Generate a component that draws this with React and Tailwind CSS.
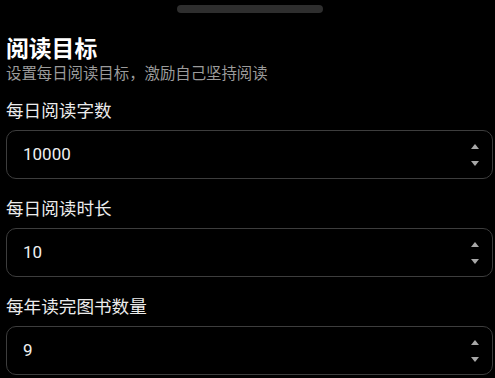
import React from "react";

const fields = [
  { label: "每日阅读字数", value: "10000" },
  { label: "每日阅读时长", value: "10" },
  { label: "每年读完图书数量", value: "9" },
];

const NumberField = ({ label, value }) => (
  <div className="flex flex-col">
    <label className="text-[17.6px] leading-[26px] text-[#ececec] mb-[6px]">{label}</label>
    <div className="h-[49px] flex items-center justify-between pl-4 pr-[13px] rounded-[10px] border border-[#3d3d3d]">
      <span className="text-[17px] text-[#f0f0f0]">{value}</span>
      <div className="flex flex-col items-center gap-[12px]">
        <span className="block w-0 h-0 border-l-[4px] border-r-[4px] border-b-[5px] border-l-transparent border-r-transparent border-b-[#a8a8a8]" />
        <span className="block w-0 h-0 border-l-[4px] border-r-[4px] border-t-[5px] border-l-transparent border-r-transparent border-t-[#a8a8a8]" />
      </div>
    </div>
  </div>
);

export default function App() {
  return (
    <div
      className="min-h-screen w-full bg-black text-white pl-[6px] pr-[2px] overflow-hidden"
      style={{ fontFamily: 'Roboto, "Noto Sans CJK SC", sans-serif' }}
    >
      {/* drag handle */}
      <div className="pt-[5px] flex justify-center">
        <div className="h-2 w-[146px] rounded-full bg-[#2e2e2e]" />
      </div>

      <h1 className="mt-[23px] text-[22.8px] font-bold leading-[28px]">阅读目标</h1>
      <p className="text-[15.4px] leading-[20px] text-[#9b9b9b]">设置每日阅读目标，激励自己坚持阅读</p>

      <div className="mt-[14px] flex flex-col gap-[17px]">
        {fields.map((f) => (
          <NumberField key={f.label} label={f.label} value={f.value} />
        ))}
      </div>
    </div>
  );
}
